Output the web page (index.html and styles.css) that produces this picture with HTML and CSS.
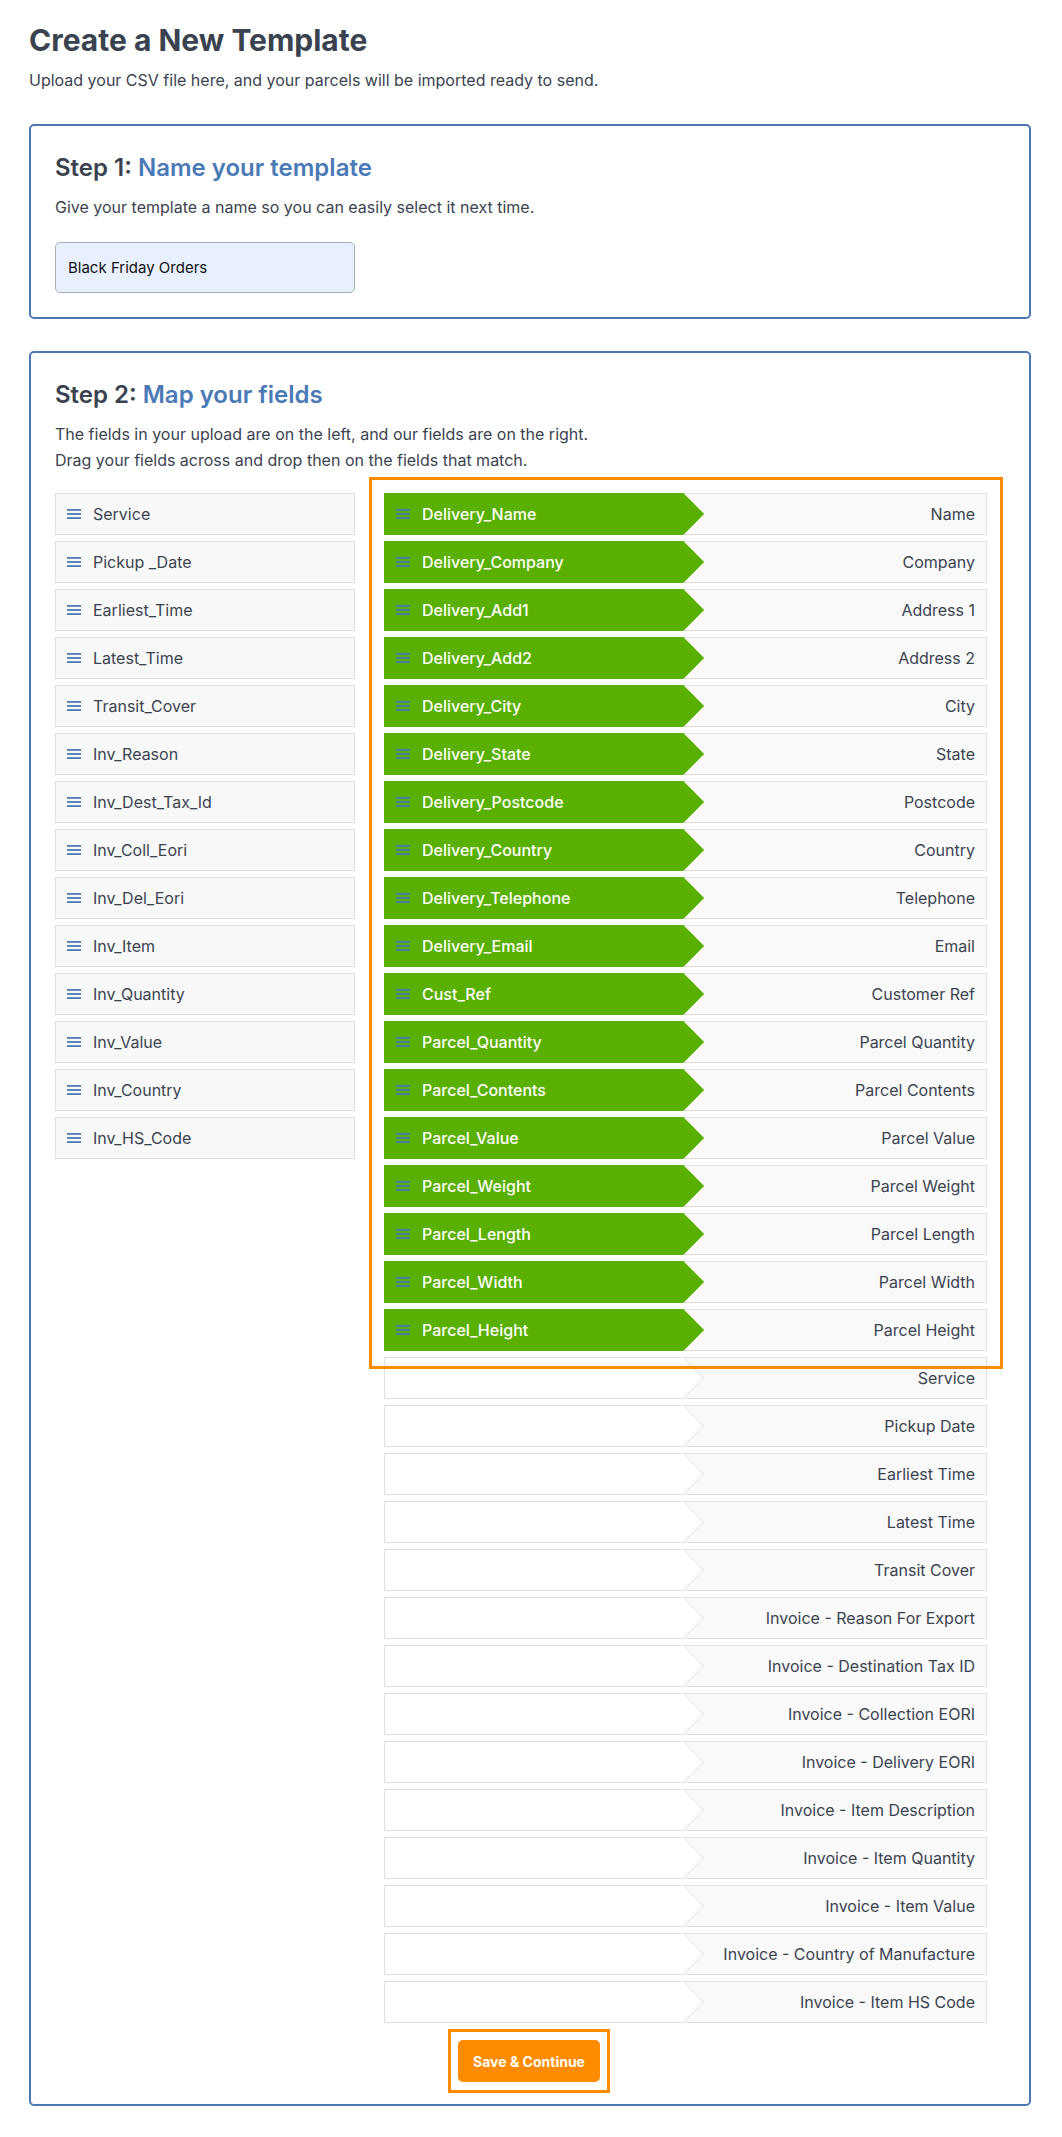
FILE: index.html
```html
<!DOCTYPE html>
<html lang="en">
<head>
    <meta charset="UTF-8">
    <meta name="viewport" content="width=device-width, initial-scale=1.0">
    <title>Create a New Template</title>
    <link rel="stylesheet" href="styles.css">
</head>
<body>
    <div class="page">
        <h1>Create a New Template</h1>
        <p class="intro">Upload your CSV file here, and your parcels will be imported ready to send.</p>

        <!-- Step 1 -->
        <div class="step">
            <h2>Step 1: <span>Name your template</span></h2>
            <p>Give your template a name so you can easily select it next time.</p>
            <input class="name-input" type="text" value="Black Friday Orders">
        </div>

        <!-- Step 2 -->
        <div class="step step-map">
            <h2>Step 2: <span>Map your fields</span></h2>
            <p>The fields in your upload are on the left, and our fields are on the right.<br>Drag your fields across and drop then on the fields that match.</p>

            <div class="mapper">
                <div class="fields"></div>
                <div class="targets">
                    <div class="highlight"></div>
                </div>
            </div>
        </div>
    </div>

    <script>
        const handle = '<svg class="handle" width="14" height="10" viewBox="0 0 14 10"><rect y="0" width="14" height="1.8"/><rect y="4.1" width="14" height="1.8"/><rect y="8.2" width="14" height="1.8"/></svg>';

        const uploadFields = [
            "Service", "Pickup _Date", "Earliest_Time", "Latest_Time", "Transit_Cover",
            "Inv_Reason", "Inv_Dest_Tax_Id", "Inv_Coll_Eori", "Inv_Del_Eori", "Inv_Item",
            "Inv_Quantity", "Inv_Value", "Inv_Country", "Inv_HS_Code"
        ];

        const ourFields = [
            { field: "Delivery_Name", label: "Name" },
            { field: "Delivery_Company", label: "Company" },
            { field: "Delivery_Add1", label: "Address 1" },
            { field: "Delivery_Add2", label: "Address 2" },
            { field: "Delivery_City", label: "City" },
            { field: "Delivery_State", label: "State" },
            { field: "Delivery_Postcode", label: "Postcode" },
            { field: "Delivery_Country", label: "Country" },
            { field: "Delivery_Telephone", label: "Telephone" },
            { field: "Delivery_Email", label: "Email" },
            { field: "Cust_Ref", label: "Customer Ref" },
            { field: "Parcel_Quantity", label: "Parcel Quantity" },
            { field: "Parcel_Contents", label: "Parcel Contents" },
            { field: "Parcel_Value", label: "Parcel Value" },
            { field: "Parcel_Weight", label: "Parcel Weight" },
            { field: "Parcel_Length", label: "Parcel Length" },
            { field: "Parcel_Width", label: "Parcel Width" },
            { field: "Parcel_Height", label: "Parcel Height" },
            { label: "Service" },
            { label: "Pickup Date" },
            { label: "Earliest Time" },
            { label: "Latest Time" },
            { label: "Transit Cover" },
            { label: "Invoice - Reason For Export" },
            { label: "Invoice - Destination Tax ID" },
            { label: "Invoice - Collection EORI" },
            { label: "Invoice - Delivery EORI" },
            { label: "Invoice - Item Description" },
            { label: "Invoice - Item Quantity" },
            { label: "Invoice - Item Value" },
            { label: "Invoice - Country of Manufacture" },
            { label: "Invoice - Item HS Code" }
        ];

        const fieldList = document.querySelector('.fields');
        uploadFields.forEach(name => {
            const item = document.createElement('div');
            item.className = 'field';
            item.innerHTML = handle + '<span>' + name + '</span>';
            fieldList.appendChild(item);
        });

        const targetList = document.querySelector('.targets');
        ourFields.forEach(row => {
            const rowDiv = document.createElement('div');
            rowDiv.className = 'map-row';
            const slot = row.field
                ? '<div class="slot filled">' + handle + '<span>' + row.field + '</span></div>'
                : '<div class="slot"></div>';
            rowDiv.innerHTML = slot + '<div class="target">' + row.label + '</div>';
            targetList.appendChild(rowDiv);
        });

        const actions = document.createElement('div');
        actions.className = 'actions';
        actions.innerHTML = '<button class="save-btn">Save &amp; Continue</button>';
        targetList.appendChild(actions);
    </script>
</body>
</html>
```

FILE: styles.css
```css
body {
    margin: 0;
    font-family: Inter, "Noto Sans", sans-serif;
    color: #3b4350;
    background-color: #fff;
}
.page {
    padding: 22px 31px 32px 29px;
}
h1 {
    margin: 0;
    font-size: 30px;
    line-height: 36px;
    font-weight: 700;
    color: #39424e;
}
.intro {
    margin: 10px 0 0;
    font-size: 16px;
    line-height: 24px;
}
.step {
    margin-top: 32px;
    padding: 27px 24px 24px;
    border: 2px solid #4a78b0;
    border-radius: 5px;
}
.step h2 {
    margin: 0;
    font-size: 24px;
    line-height: 30px;
    font-weight: 600;
    color: #39424e;
}
.step h2 span {
    color: #4a7ab5;
}
.step p {
    margin: 11px 0 0;
    font-size: 16px;
    line-height: 26px;
}
.name-input {
    display: block;
    box-sizing: border-box;
    width: 300px;
    height: 51px;
    margin-top: 22px;
    padding: 0 12px;
    border: 1px solid #a9aeb5;
    border-radius: 5px;
    background-color: #e8f0fe;
    font-family: Inter, "Noto Sans", sans-serif;
    font-size: 15px;
    color: #111;
}
.step-map {
    padding-bottom: 11px;
}
.mapper {
    display: flex;
    align-items: flex-start;
    gap: 29px;
    margin-top: 20px;
}
.fields, .targets {
    display: flex;
    flex-direction: column;
    gap: 6px;
}
.fields {
    width: 300px;
}
.targets {
    width: 603px;
    position: relative;
}
.handle {
    flex-shrink: 0;
    fill: #4a78b4;
}
.field {
    box-sizing: border-box;
    height: 42px;
    display: flex;
    align-items: center;
    gap: 12px;
    padding-left: 11px;
    border: 1px solid #e0e0e0;
    background-color: #f8f8f8;
    font-size: 16px;
}
.map-row {
    display: flex;
    height: 42px;
}
.slot {
    position: relative;
    z-index: 1;
    box-sizing: border-box;
    width: 299px;
    display: flex;
    align-items: center;
    gap: 12px;
    padding-left: 11px;
    border: 1px solid #e0e0e0;
    border-right: none;
    background-color: #fff;
    font-size: 16px;
    font-weight: 500;
    color: #fff;
}
.slot::after {
    content: "";
    position: absolute;
    top: 5px;
    right: -15px;
    box-sizing: border-box;
    width: 30px;
    height: 30px;
    border-top: 1px solid #e6e6e6;
    border-right: 1px solid #e6e6e6;
    background-color: #fff;
    transform: rotate(45deg);
}
.slot.filled {
    border-color: #5ab000;
    background-color: #5ab000;
}
.slot.filled::after {
    border: none;
    background-color: #5ab000;
}
.target {
    flex: 1;
    box-sizing: border-box;
    display: flex;
    align-items: center;
    justify-content: flex-end;
    padding-right: 11px;
    border: 1px solid #e0e0e0;
    border-left: none;
    background-color: #f9f9f9;
    font-size: 16px;
}
.highlight {
    position: absolute;
    top: -16px;
    left: -15px;
    z-index: 2;
    box-sizing: border-box;
    width: 634px;
    height: 892px;
    border: 3px solid #ff8c00;
    pointer-events: none;
}
.actions {
    align-self: flex-start;
    margin-left: 64px;
    padding: 8px 7px;
    border: 3px solid #ff8c00;
}
.save-btn {
    display: block;
    width: 142px;
    height: 42px;
    border: none;
    border-radius: 5px;
    background-color: #ff8c00;
    font-family: Inter, "Noto Sans", sans-serif;
    font-size: 14px;
    font-weight: 700;
    color: #fff;
}
```
